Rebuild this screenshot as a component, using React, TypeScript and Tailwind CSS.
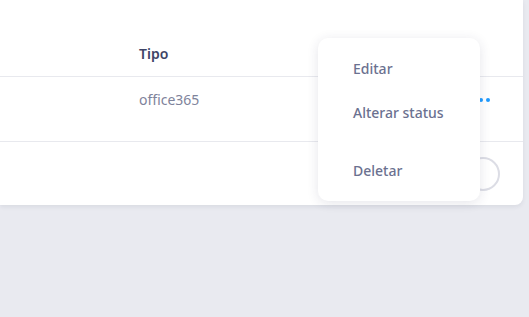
export default function App() {
  return (
    <div
      className="h-[317px] w-[529px] overflow-hidden bg-[#e9eaf0]"
      style={{ fontFamily: '"Noto Sans", "Open Sans", sans-serif' }}
    >
      <div className="relative h-[205px] w-[523px] rounded-br-[8px] bg-white shadow-[0_2px_4px_rgba(40,45,80,0.08)]">
        {/* table */}
        <div className="pt-[38px]">
          <div className="flex h-[39px] items-start border-b border-[#e8e9ee]">
            <span className="ml-[139px] mt-[5px] text-[14px] font-semibold text-[#3d4466]">Tipo</span>
          </div>
          <div className="flex h-[65px] items-start border-b border-[#e8e9ee]">
            <span className="ml-[139px] mt-[12px] text-[14px] text-[#7e839b]">office365</span>
            <span className="ml-auto mr-[33px] mt-[21px] flex gap-[3px]">
              <span className="h-[4px] w-[4px] rounded-full bg-[#1f9bff]" />
              <span className="h-[4px] w-[4px] rounded-full bg-[#1f9bff]" />
              <span className="h-[4px] w-[4px] rounded-full bg-[#1f9bff]" />
            </span>
          </div>
          <div className="flex h-[63px] items-start justify-end">
            <div className="mr-[23px] mt-[15px] h-[34px] w-[34px] rounded-full border-2 border-[#dcdde5]" />
          </div>
        </div>

        {/* dropdown menu */}
        <div className="absolute left-[318px] top-[38px] flex h-[163px] w-[162px] flex-col rounded-[10px] bg-white shadow-[0_2px_12px_rgba(40,45,80,0.12)]">
          <div className="flex h-[43px] items-end pl-[35px] pb-[2px] text-[14px] font-medium text-[#6b7190]">Editar</div>
          <div className="flex h-[44px] items-end pl-[35px] pb-[2px] text-[14px] font-medium text-[#6b7190]">Alterar status</div>
          <div className="flex h-[58px] items-end pl-[35px] pb-[2px] text-[14px] font-medium text-[#6b7190]">Deletar</div>
        </div>
      </div>
    </div>
  );
}
